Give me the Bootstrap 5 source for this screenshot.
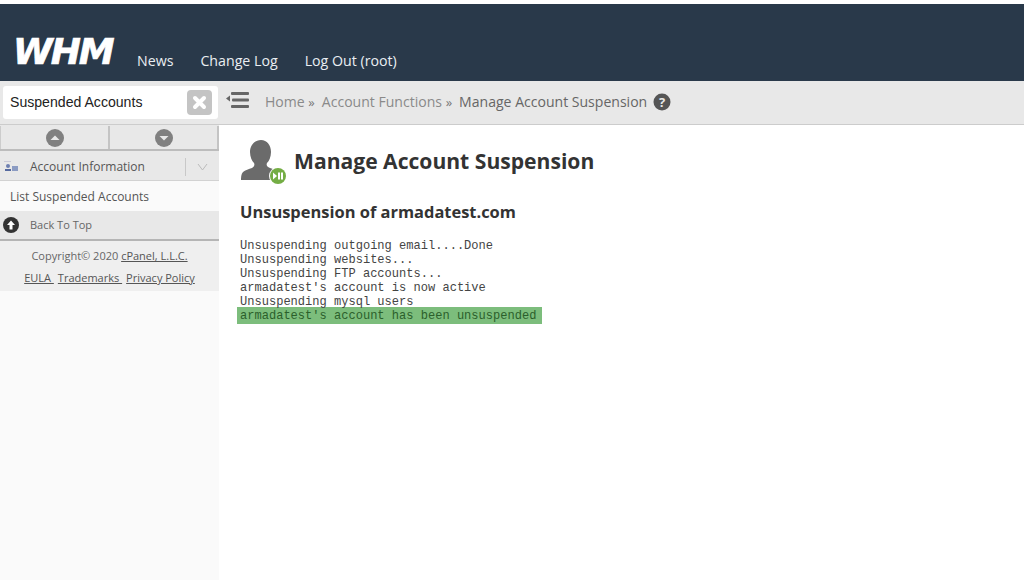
<!DOCTYPE html>
<html lang="en">
<head>
<meta charset="utf-8">
<title>WHM</title>
<link rel="stylesheet" href="https://cdn.jsdelivr.net/npm/bootstrap@5.3.0/dist/css/bootstrap.min.css">
<style>
html,body{height:580px;overflow:hidden;background:#fff;}
body{font-family:"Open Sans",sans-serif;font-size:12px;color:#333;}
a{color:inherit;}
.top-bar{margin-top:4px;height:77px;background:#29394a;padding-left:13px;}
.whm-logo{font-family:"DejaVu Sans",sans-serif;font-weight:700;font-style:italic;font-size:36px;line-height:28px;color:#fff;width:103px;margin-top:34px;letter-spacing:-2px;white-space:nowrap;-webkit-text-stroke:.7px #fff;}
.top-links{gap:27px;margin-left:21px;padding-bottom:10px;}
.top-links a{font-size:14.2px;line-height:20px;color:#eaeef2;text-decoration:none;}
.shell{height:499px;}
.side-col{width:219px;background:#fafafa;flex:none;}
.search-wrap{height:44px;background:#e8e8e8;padding:5px 1px 5px 3px;border-bottom:1px solid #ccc;}
.search-box{height:33px;width:100%;background:#fff;border-radius:3px;padding:0 6px 0 7px;font-family:"Liberation Sans",sans-serif;font-size:14.1px;color:#222;}
.clear-btn{width:25px;height:25px;background:#c4c4c4;border-radius:4px;}
.arrows{height:27px;background:#e8e8e8;border-bottom:2px solid #bcbcbc;border-top:1px solid #ccc;margin-top:-1px;padding-top:1px;}
.arrow-cell{flex:1 1 0;border-right:2px solid #c4c4c4;}
.arrow-cell:first-child{border-left:1px solid #ccc;}
.group-head{height:30px;background:#e8e8e8;border-bottom:1px solid #d2d2d2;padding:2px 0 0 4px;color:#555;font-size:12px;}
.group-label{margin-left:11px;flex:1;}
.group-tog{width:34px;height:18px;border-left:1px solid #c8c8c8;}
.list-link{height:30px;background:#fafafa;padding:1px 0 0 10px;color:#555;font-size:12px;}
.back-top{height:30px;background:#e8e8e8;border-bottom:2px solid #b5b5b5;padding-left:3px;color:#666;font-size:11px;}
.back-top span{margin-left:11px;}
.side-foot{height:50px;background:#efefef;color:#666;font-size:11px;text-align:center;padding-top:4px;line-height:22px;}
.side-foot a{color:#555;margin:0 2px;}
.main-col{flex:1;min-width:0;}
.crumb-bar{height:44px;background:#e8e8e8;border-bottom:1px solid #ccc;padding:0 0 1px 7px;font-size:14.05px;color:#8a8a8a;}
.crumb-list{margin-left:16px;gap:4px;}
.crumb-list b{font-weight:400;color:#777;font-size:13px;margin-right:3px;}
.crumb-now{color:#666;}
.help-ico{margin-left:2px;}
.page-pad{padding:14px 0 0 21px;}
.page-title{font-size:21.1px;font-weight:700;color:#333;line-height:30px;margin:0 0 0 6px;position:relative;top:-2px;}
.sub-title{font-size:16.45px;font-weight:700;color:#333;line-height:22px;margin:14px 0 16px;}
.log-block{font-family:"Liberation Mono",monospace;font-size:12.05px;line-height:14px;color:#444;margin-left:-3px;padding-left:3px;}
.log-ok{background:#7cbd7c;color:#2b5f2b;width:305px;margin-top:-2px;padding:2px 0 1px 3px;line-height:14px;}
</style>
</head>
<body>
<header class="top-bar d-flex align-items-end">
  <div class="whm-logo align-self-start">WHM</div>
  <nav class="top-links d-flex">
    <a href="#">News</a><a href="#">Change Log</a><a href="#">Log Out (root)</a>
  </nav>
</header>
<div class="shell d-flex">
  <aside class="side-col">
    <div class="search-wrap">
      <div class="search-box d-flex align-items-center justify-content-between">
        <span>Suspended Accounts</span>
        <span class="clear-btn d-flex align-items-center justify-content-center">
          <svg width="15" height="15" viewBox="0 0 15 15"><path d="M3 3l9 9M12 3l-9 9" stroke="#fff" stroke-width="4" stroke-linecap="round"/></svg>
        </span>
      </div>
    </div>
    <div class="arrows d-flex">
      <div class="arrow-cell d-flex align-items-center justify-content-center">
        <svg width="18" height="18" viewBox="0 0 18 18"><circle cx="9" cy="9" r="9" fill="#808080"/><path d="M4.500 11L9 6.500l4.500 4.500z" fill="#e8e8e8"/></svg>
      </div>
      <div class="arrow-cell d-flex align-items-center justify-content-center">
        <svg width="18" height="18" viewBox="0 0 18 18"><circle cx="9" cy="9" r="9" fill="#808080"/><path d="M4.500 7L9 11.500 13.500 7z" fill="#e8e8e8"/></svg>
      </div>
    </div>
    <div class="group-head d-flex align-items-center">
      <svg width="15" height="12" viewBox="0 0 15 12"><rect x="0" y="0" width="7" height="1" fill="#c9c9d6"/><circle cx="4" cy="5" r="2" fill="#6d7fb0"/><rect x="1" y="8" width="6" height="2" fill="#55699f"/><rect x="8" y="5" width="6" height="5" fill="#8b9bc2"/></svg>
      <span class="group-label">Account Information</span>
      <span class="group-tog d-flex align-items-center justify-content-center">
        <svg width="11" height="8" viewBox="0 0 11 8"><path d="M1 1l4.500 6L10 1" fill="none" stroke="#bbb" stroke-width="1"/></svg>
      </span>
    </div>
    <a class="list-link d-flex align-items-center text-decoration-none" href="#">List Suspended Accounts</a>
    <div class="back-top d-flex align-items-center">
      <svg width="16" height="16" viewBox="0 0 16 16"><circle cx="8" cy="8" r="8" fill="#333"/><path d="M8 3.500L12 8H9.500v4.500h-3V8H4z" fill="#fff"/></svg>
      <span>Back To Top</span>
    </div>
    <div class="side-foot">
      <div>Copyright© 2020 <a href="#" class="mx-0">cPanel, L.L.C.</a></div>
      <div><a href="#">EULA </a> <a href="#">Trademarks </a> <a href="#">Privacy Policy</a></div>
    </div>
  </aside>
  <main class="main-col">
    <div class="crumb-bar d-flex align-items-center">
      <svg class="mb-1" width="23" height="18" viewBox="0 0 23 18"><path d="M0 7.500L4 4.500v6z" fill="#666"/><rect x="5" y="1" width="18" height="3" rx="1" fill="#666"/><rect x="6" y="7.500" width="17" height="3" rx="1" fill="#666"/><rect x="5" y="14" width="18" height="3" rx="1" fill="#666"/></svg>
      <div class="crumb-list d-flex align-items-baseline">
        <span>Home <b>»</b></span>
        <span>Account Functions <b>»</b></span>
        <span class="crumb-now">Manage Account Suspension</span>
        <svg class="help-ico align-self-center" width="18" height="18" viewBox="0 0 18 18"><circle cx="9" cy="9" r="8.500" fill="#555"/><text x="9" y="13.500" font-family="Open Sans, sans-serif" font-size="13" font-weight="700" fill="#e8e8e8" text-anchor="middle">?</text></svg>
      </div>
    </div>
    <div class="page-pad">
      <div class="d-flex align-items-center">
        <svg width="48" height="48" viewBox="0 0 48 48">
          <path d="M21 1c6 0 10 5 10 12 0 5-2 9-4 11-1 2 0 4 3 5 3 1 6 2 7 4 1 3 1 7 1 8H1c0-2 0-6 2-8 2-2 6-3 9-4 2-1 3-3 2-5-2-2-4-6-4-11 0-7 5-12 11-12z" fill="#6b6b6b"/>
          <circle cx="38" cy="37" r="9" fill="#fff"/><circle cx="38" cy="37" r="8" fill="#74ad44"/>
          <path d="M33 33.500l4 3.500-4 3.500z" fill="#fff"/><rect x="38" y="33.500" width="2" height="7" fill="#fff"/><rect x="41" y="33.500" width="2" height="7" fill="#fff"/>
        </svg>
        <h1 class="page-title">Manage Account Suspension</h1>
      </div>
      <h2 class="sub-title">Unsuspension of armadatest.com</h2>
      <div class="log-block">
        <div>Unsuspending outgoing email....Done</div>
        <div>Unsuspending websites...</div>
        <div>Unsuspending FTP accounts...</div>
        <div>armadatest's account is now active</div>
        <div>Unsuspending mysql users</div>
      </div>
      <div class="log-block log-ok">armadatest's account has been unsuspended</div>
    </div>
  </main>
</div>
<script src="https://cdn.jsdelivr.net/npm/bootstrap@5.3.0/dist/js/bootstrap.bundle.min.js"></script>
</body>
</html>
